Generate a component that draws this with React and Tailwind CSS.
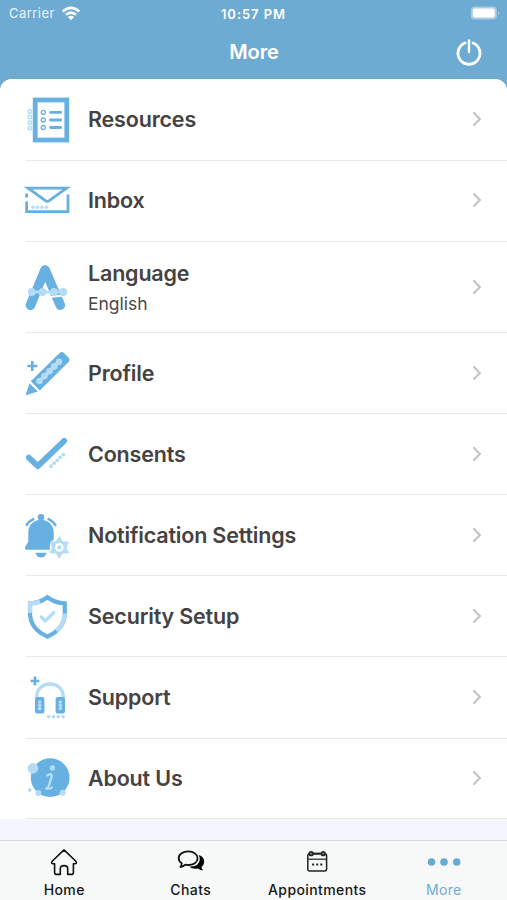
import clsx from 'clsx';

const BLUE = '#67b1e2';
const LIGHT = '#b5dcf6';

function Icon({ children }) {
  return (
    <svg viewBox="0 0 48 48" className="w-12 h-12 shrink-0" fill="none">
      {children}
    </svg>
  );
}

function Dots({ points, r = 1.5, fill = LIGHT }) {
  return points.map(([x, y]) => <circle key={`${x}-${y}`} cx={x} cy={y} r={r} fill={fill} />);
}

function ResourcesIcon() {
  return (
    <Icon>
      <rect x="11.2" y="5" width="31.6" height="40" stroke={BLUE} strokeWidth="4.8" />
      {[17.4, 25, 32.5].map((y) => (
        <g key={y} stroke={BLUE}>
          <circle cx="19.3" cy={y} r="2" strokeWidth="1.3" />
          <path d={`M26.6 ${y}H36.6`} strokeWidth="2.9" strokeLinecap="round" />
        </g>
      ))}
      <g stroke={LIGHT} strokeWidth="1.6">
        {[16.5, 22, 27.5, 33].map((y) => (
          <circle key={y} cx="5.9" cy={y} r="1.7" />
        ))}
      </g>
    </Icon>
  );
}

function InboxIcon() {
  return (
    <Icon>
      <path d="M2.6 21.5V17.5M2.6 25.5V35.6H44V18.5" stroke={BLUE} strokeWidth="2.8" />
      <path d="M4.2 12.2H42.6L25.2 24.7Q23.3 26 21.4 24.7Z" stroke={BLUE} strokeWidth="2.8" />
      <Dots points={[[9, 31.2], [13.5, 31.2], [18, 31.2], [22.5, 31.2]]} r={1.8} />
    </Icon>
  );
}

function LanguageIcon() {
  return (
    <Icon>
      <path d="M6.5 42.2L21 7L36.3 42.2" stroke={BLUE} strokeWidth="9.6" strokeLinecap="round" strokeLinejoin="round" />
      <path d="M21.2 19L17.5 28H25Z" fill="#fff" />
      <path d="M25.5 34L41 32.3" stroke="#fff" strokeWidth="2" />
      <path d="M7 29H39" stroke={LIGHT} strokeWidth="3" />
      <Dots points={[[7.7, 29], [18.5, 29], [30, 29], [39.3, 29]]} r={3.9} />
    </Icon>
  );
}

function ProfileIcon() {
  return (
    <Icon>
      <path d="M8.3 12V22M3.3 17H13.3" stroke={BLUE} strokeWidth="2.6" />
      <path d="M35.6 3.9Q37.8 1.9 40 3.9L44.6 8.7Q46.5 10.9 44.5 13L15.8 41.4L6.8 32.3Z" fill={BLUE} />
      <path d="M5.5 34.2L13.8 42.4L1.5 46.2Z" fill={BLUE} />
      <path d="M16 31.8L35 12.8" stroke={LIGHT} strokeWidth="3.5" />
      <Dots points={[[15.5, 32], [20.5, 27], [25.5, 22.2], [30.3, 17.4], [35, 12.8]]} r={3.3} />
    </Icon>
  );
}

function ConsentsIcon() {
  return (
    <Icon>
      <path d="M4.8 27.6L13.8 36.2L40.2 10.8" stroke={BLUE} strokeWidth="5.8" strokeLinecap="round" strokeLinejoin="round" />
      <Dots points={[[27, 36.2], [30.1, 33.2], [33.2, 30.3], [36.2, 27.3], [39.3, 24.6]]} r={1.9} />
    </Icon>
  );
}

function BellIcon() {
  return (
    <Icon>
      <circle cx="17" cy="6.3" r="3.3" fill={BLUE} />
      <path
        d="M17 8.4C24 8.9 29.7 13.9 29.7 20.9V30.4L33 35.9Q33.8 38.8 31.5 38.8H3Q.2 38.8 1.3 35.7L4.3 30.4V20.9C4.3 13.9 10 8.9 17 8.4Z"
        fill={BLUE}
      />
      <path d="M11.5 41.7H22.5Q21 46.6 17 46.6Q13 46.6 11.5 41.7Z" fill={BLUE} />
      <path d="M2.7 13.8Q5.2 9.9 9.2 8.2M24.6 8.2Q28.8 10.2 31.3 14" stroke={BLUE} strokeWidth="2.6" strokeLinecap="round" />
      <g transform="translate(35.3 36.4)">
        <circle r="9.6" fill="#fff" />
        <path
          d="M0-10L2.9-5.4L8.7-5L6.2 0L8.7 5L2.9 5.4L0 10L-2.9 5.4L-8.7 5L-6.2 0L-8.7-5L-2.9-5.4Z"
          fill={LIGHT}
          stroke={LIGHT}
          strokeWidth="1.6"
          strokeLinejoin="round"
        />
        <circle r="4.3" fill="#fff" />
        <circle r="2.1" fill={LIGHT} />
      </g>
    </Icon>
  );
}

function ShieldIcon() {
  return (
    <Icon>
      <path
        d="M23.4 5.3Q31 11 40.8 11.4V21C40.8 32 34 39.8 23.4 44.6C12.8 39.8 6 32 6 21V11.4Q15.8 11 23.4 5.3Z"
        stroke={BLUE}
        strokeWidth="4.2"
      />
      <path d="M6 21V11.4Q11.5 11.2 16 9.4M40.8 21.5C40.4 29 37.6 34.6 32.5 38.9" stroke={LIGHT} strokeWidth="4.3" />
      <path d="M17.3 25L21.3 28.9L29.8 20.5" stroke={LIGHT} strokeWidth="3.4" strokeLinecap="round" />
    </Icon>
  );
}

function SupportIcon() {
  return (
    <Icon>
      <path d="M11 3.6V12.4M6.6 8H15.4" stroke={BLUE} strokeWidth="2.6" />
      <path d="M12.8 24.5V23.5C12.8 16 18.6 11 26 11S39.2 16 39.2 23.5V24.5" stroke={LIGHT} strokeWidth="3.4" />
      <rect x="11" y="24" width="9.4" height="16.5" rx="2" fill={BLUE} />
      <rect x="31.6" y="24" width="9.4" height="16.5" rx="2" fill={BLUE} />
      <Dots points={[[15.7, 29], [15.7, 32.3], [15.7, 35.6], [36.3, 29], [36.3, 32.3], [36.3, 35.6]]} r={1.8} />
      <Dots points={[[24.6, 43.8], [29.4, 43.8], [34.2, 43.8], [39, 43.8]]} r={1.8} />
    </Icon>
  );
}

function AboutIcon() {
  return (
    <Icon>
      <circle cx="26.2" cy="23.7" r="19.4" fill={BLUE} />
      <Dots points={[[8.9, 14.3]]} r={5.4} />
      <Dots points={[[5.7, 36]]} r={1.9} />
      <Dots points={[[14.3, 38.9], [38.7, 38.7]]} r={3} />
      <circle cx="28.4" cy="13.9" r="2.6" fill={LIGHT} />
      <path d="M23.4 21.3Q26 19.6 27.4 20.4Q28.2 21.2 27.3 24L24.6 32.4Q23.6 35.6 22.2 34.4" stroke={LIGHT} strokeWidth="2.5" strokeLinecap="round" />
      <path d="M24.4 34.6Q26.4 35.2 28 33.4" stroke={LIGHT} strokeWidth="2" strokeLinecap="round" />
    </Icon>
  );
}

function HomeIcon() {
  return (
    <svg viewBox="0 0 28 28" className="w-7 h-7" fill="none">
      <path
        d="M14 1.8L25.6 13Q27.5 15.4 25 15.8H23.4V24.4Q23.4 26.4 21.4 26.4H17.7V20.5Q17.7 17.6 14 17.6T10.3 20.5V26.4H6.6Q4.6 26.4 4.6 24.4V15.8H3Q.5 15.4 2.4 13Z"
        stroke="#111"
        strokeWidth="1.6"
        strokeLinejoin="round"
      />
    </svg>
  );
}

function ChatsIcon() {
  return (
    <svg viewBox="0 0 28 28" className="w-7 h-7">
      <path d="M21.5 7Q27.3 8.6 27.2 14Q27 17.2 24.5 18.8Q24.5 20.5 26 22.5Q22.5 22.2 20.8 20.6Q15.5 21.4 12.2 18.8Q22.8 18.5 22.8 11Q22.8 8.8 21.5 7Z" fill="#000" />
      <path
        d="M11.3 3.4C16.6 3.4 20.6 6.3 20.6 10.3S16.6 17 11.3 17Q9.8 17 8.4 16.7Q6.5 18.6 3.4 19Q4.7 17.4 4.7 15.3C2.7 14 1.7 12.2 1.7 10.3C1.7 6.3 6 3.4 11.3 3.4Z"
        fill="none"
        stroke="#111"
        strokeWidth="1.8"
        strokeLinejoin="round"
      />
    </svg>
  );
}

function CalendarIcon() {
  return (
    <svg viewBox="0 0 28 28" className="w-7 h-7" fill="none" stroke="#222">
      <rect x="4.8" y="5.8" width="18.8" height="17.3" rx="2" strokeWidth="1.5" />
      <path d="M5 11.2H23" strokeWidth="1.2" />
      <path d="M10.5 5.6H17.5" strokeWidth="2" />
      <circle cx="8.2" cy="5.7" r="1.9" fill="#777" strokeWidth="1.5" />
      <circle cx="20.2" cy="5.7" r="1.9" fill="#777" strokeWidth="1.5" />
      <path d="M9.1 16.4H11.1M13.2 16.4H15.2M17.3 16.4H19.3" strokeWidth="2" />
    </svg>
  );
}

function MoreIcon() {
  return (
    <svg viewBox="0 0 36 28" className="w-9 h-7" fill="#67abd3">
      <circle cx="5.5" cy="14" r="3.8" />
      <circle cx="18" cy="14" r="3.8" />
      <circle cx="30.7" cy="14" r="3.8" />
    </svg>
  );
}

const items = [
  { label: 'Resources', icon: ResourcesIcon, height: 'h-[82px] pb-0.5' },
  { label: 'Inbox', icon: InboxIcon, height: 'h-[81px] pb-[3px]' },
  { label: 'Language', detail: 'English', icon: LanguageIcon, height: 'h-[91px] pb-0.5' },
  { label: 'Profile', icon: ProfileIcon, height: 'h-[81px] pb-0.5' },
  { label: 'Consents', icon: ConsentsIcon, height: 'h-[81px] pb-0.5' },
  { label: 'Notification Settings', icon: BellIcon, height: 'h-[81px] pb-0.5' },
  { label: 'Security Setup', icon: ShieldIcon, height: 'h-[81px] pb-0.5' },
  { label: 'Support', icon: SupportIcon, height: 'h-[82px] pb-0.5' },
  { label: 'About Us', icon: AboutIcon, height: 'h-20 pb-[3px]' },
];

const tabs = [
  { label: 'Home', icon: HomeIcon },
  { label: 'Chats', icon: ChatsIcon },
  { label: 'Appointments', icon: CalendarIcon },
  { label: 'More', icon: MoreIcon, active: true },
];

function StatusBar() {
  return (
    <div className="grid grid-cols-3 items-center h-7 pl-[9px] pr-[7px] text-[13px]">
      <div className="flex items-center gap-[7px] tracking-[0.45px] text-white/85">
        Carrier
        <svg viewBox="0 0 20 15" className="w-5 h-[15px] mb-0.5 -ml-px" fill="none" stroke="#fff" strokeWidth="2.6">
          <path d="M1.8 5.4Q10-1.6 18.2 5.4M5 8.8Q10 4.5 15 8.8" />
          <path d="M10 14.2L6.8 11Q10 8.4 13.2 11Z" fill="#fff" stroke="none" />
        </svg>
      </div>
      <div className="-ml-0.5 pt-px text-center font-semibold tracking-[0.95px]">10:57 PM</div>
      <svg viewBox="0 0 30 14" className="w-[30px] h-3.5 mb-0.5 justify-self-end">
        <rect x="0.8" y="0.5" width="26" height="13" rx="4" fill="#fff" opacity="0.4" />
        <rect x="2.8" y="2.5" width="22" height="9" rx="2.2" fill="#fff" />
        <path d="M28 5Q30 7 28 9Z" fill="#fff" opacity="0.5" />
      </svg>
    </div>
  );
}

function Header() {
  return (
    <header className="h-[79px] text-white">
      <StatusBar />
      <div className="grid grid-cols-3 items-center h-12 px-6">
        <h1 className="col-start-2 pl-px text-center text-[20px] font-semibold tracking-[-0.1px]">More</h1>
        <svg viewBox="0 0 28 28" className="w-7 h-7 justify-self-end" fill="none" stroke="#fff" strokeWidth="2.8" strokeLinecap="round">
          <path d="M10 5A11 11 0 1 0 18 5" />
          <path d="M14 2.5V14" strokeWidth="2.4" />
        </svg>
      </div>
    </header>
  );
}

function MenuRow({ item }) {
  const ItemIcon = item.icon;
  return (
    <li className={clsx('flex items-center pl-6', item.height)}>
      <ItemIcon />
      <div className="ml-4 flex-1">
        <div className={clsx('text-[21.5px] leading-7 font-semibold tracking-[-0.18px] text-[#454243]', item.detail && 'mt-[3px]')}>
          {item.label}
        </div>
        {item.detail && <div className="mt-[3px] text-[17.5px] leading-7 text-[#4b4849]">{item.detail}</div>}
      </div>
      <svg viewBox="0 0 12 18" className="w-3 h-[18px] mr-6" fill="none" stroke="#c5c5c7" strokeWidth="2.2" strokeLinecap="round">
        <path d="M3 3L8.8 9L3 15" />
      </svg>
    </li>
  );
}

export default function App() {
  return (
    <div className="flex flex-col w-[507px] h-[900px] overflow-hidden bg-[#6dabd3] font-['Inter',sans-serif]">
      <Header />
      <main className="flex-1 overflow-hidden rounded-t-[12px] bg-[#f4f5fe]">
        <ul className="bg-white">
          {items.map((item) => (
            <div key={item.label}>
              <MenuRow item={item} />
              <div className="-mt-px ml-[26px] h-px bg-[#e8e8e9]" />
            </div>
          ))}
        </ul>
      </main>
      <nav className="grid grid-cols-4 h-[60px] pl-px border-t border-[#d9dade] bg-[#f7f8f8]">
        {tabs.map((tab) => {
          const TabIcon = tab.icon;
          return (
            <div key={tab.label} className="flex flex-col items-center pt-[7px]">
              <TabIcon />
              <span
                className={clsx(
                  'mt-1 text-[14px] leading-5',
                  tab.active ? 'tracking-[0.3px] text-[#6dabd3]' : 'font-medium tracking-[0.4px] text-[#161616]'
                )}
              >
                {tab.label}
              </span>
            </div>
          );
        })}
      </nav>
    </div>
  );
}
